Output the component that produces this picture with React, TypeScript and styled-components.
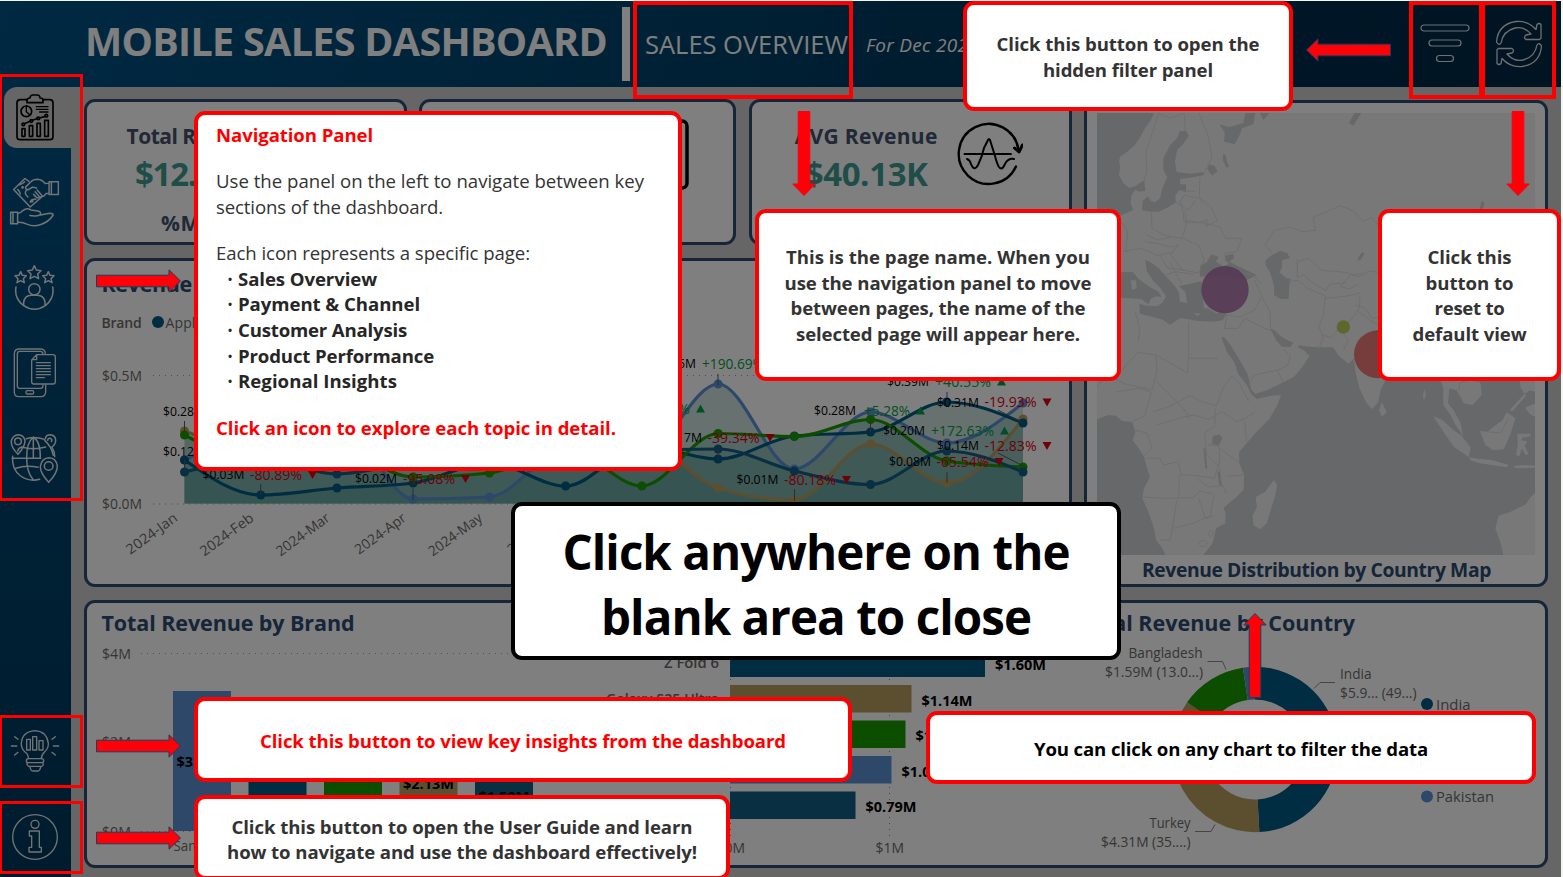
import React, { useLayoutEffect, useRef } from 'react';
import styled, { createGlobalStyle } from 'styled-components';

const FONT = '"Open Sans", "Noto Sans", sans-serif';
const C = {
  navy: '#2c4a70',
  slate: '#42506c',
  teal: '#3f9a8f',
  axis: '#6c6a69',
  ocean: '#005a82',
  deep: '#106084',
  green: '#189a00',
  tan: '#b89e60',
  blue: '#5c90d2',
  up: '#00a046',
  down: '#e00010',
};

const GlobalStyle = createGlobalStyle`
  html, body { margin: 0; padding: 0; background: #fff; }
  body { width: 1563px; height: 877px; overflow: hidden; font-family: ${FONT}; }
  * { box-sizing: border-box; }
  svg { display: block; }
  svg text { font-family: ${FONT}; }
`;

/* ---------- text whose tracking is adjusted to a set line width ---------- */

const Line = styled.span`
  display: inline-block;
  white-space: pre;
`;

function Fit({ w, children }: { w: number; children: string }) {
  const ref = useRef<HTMLSpanElement>(null);
  useLayoutEffect(() => {
    const el = ref.current;
    if (!el) return;
    el.style.letterSpacing = '0px';
    const natural = el.getBoundingClientRect().width;
    const step = (w - natural) / children.length;
    el.style.letterSpacing = `${step}px`;
  }, [w, children]);
  return <Line ref={ref}>{children}</Line>;
}

/* ---------- page shell ---------- */

const Page = styled.div`
  position: relative;
  width: 1563px;
  height: 877px;
  overflow: hidden;
  padding: 1px 2px 0 0;
  background: #f4f6f4;
`;

const Dashboard = styled.div`
  position: relative;
  display: flex;
  flex-direction: column;
  height: 876px;
  background: #cccccc;
`;

const Shade = styled.div`
  position: absolute;
  inset: 0;
  background: rgba(0, 0, 0, 0.5);
`;

const Header = styled.header`
  display: flex;
  align-items: center;
  height: 86px;
  flex: none;
  padding-left: 85px;
  color: #fff;
  background: linear-gradient(100deg, #005284 0%, #00446e 40%, #002c4c 85%, #002844 100%);
`;

const AppTitle = styled.h1`
  margin: 0;
  width: 537px;
  font-size: 39.5px;
  font-weight: 700;
  line-height: 52px;
  padding-bottom: 6px;
`;

const Divider = styled.div`
  width: 8px;
  height: 74px;
  background: #fff;
`;

const PageName = styled.div`
  width: 236px;
  padding-left: 15px;
  padding-bottom: 1px;
  font-size: 25.5px;
  line-height: 32px;
`;

const Period = styled.div`
  flex: 1;
  padding-top: 2px;
  font-size: 19px;
  font-style: italic;
  line-height: 26px;
`;

const HeaderButton = styled.button`
  display: flex;
  align-items: center;
  justify-content: center;
  width: 74px;
  height: 86px;
  padding: 0 1px 0 0;
  border: 0;
  background: none;
`;

const HeaderActions = styled.div`
  display: flex;
  padding-right: 5px;
`;

const Body = styled.div`
  display: flex;
  flex: 1;
`;

const Sidebar = styled.nav`
  display: flex;
  flex-direction: column;
  width: 71px;
  background: linear-gradient(180deg, #005284 0%, #00446e 45%, #00375c 100%);
`;

const NavGroup = styled.div<{ $gap: number; $top?: number }>`
  display: flex;
  flex-direction: column;
  gap: ${(p) => p.$gap}px;
  margin-top: ${(p) => p.$top ?? 0}px;
`;

const NavItem = styled.div<{ $active?: boolean }>`
  display: flex;
  align-items: center;
  justify-content: center;
  height: 61px;
  margin-left: 4px;
  padding-right: 6px;
  border-radius: 13px 0 0 13px;
  color: ${(p) => (p.$active ? '#000' : '#e4e8ec')};
  background: ${(p) => (p.$active ? '#cccccc' : 'transparent')};
`;

const Content = styled.main`
  display: grid;
  grid-template-columns: 323px 317px 323px 464px;
  grid-template-rows: 146px 329px 268px;
  column-gap: 12.333px;
  row-gap: 13px;
  padding: 12px 0 0 13px;
`;

const Card = styled.section<{ $area?: string; $top?: number }>`
  grid-area: ${(p) => p.$area ?? 'auto'};
  margin-top: ${(p) => p.$top ?? 0}px;
  border: 3px solid ${C.navy};
  border-radius: 11px;
  background: #fff;
  overflow: hidden;
  min-width: 0;
`;

const Kpi = styled(Card)`
  display: flex;
`;

const KpiText = styled.div<{ $w: number }>`
  display: flex;
  flex: none;
  flex-direction: column;
  align-items: center;
  width: ${(p) => p.$w}px;
  padding-top: 19px;
  color: ${C.slate};
  font-size: 21px;
  font-weight: 700;
  line-height: 30px;
`;

const KpiValue = styled.div`
  color: ${C.teal};
  font-size: 33px;
  line-height: 46px;
`;

const KpiSub = styled.div`
  margin-top: 11px;
`;

const KpiIcon = styled.div<{ $left: number; $top: number }>`
  margin: ${(p) => p.$top}px 0 0 ${(p) => p.$left}px;
`;

const ChartTitle = styled.h2<{ $pad?: number; $h?: number; $top?: number }>`
  margin: 0;
  height: ${(p) => p.$h ?? 40}px;
  padding: ${(p) => p.$top ?? 0}px 0 0 ${(p) => p.$pad ?? 14.5}px;
  color: ${C.navy};
  font-size: 21.5px;
  font-weight: 700;
  line-height: 40px;
`;

const Legend = styled.div`
  display: flex;
  align-items: center;
  gap: 2px;
  height: 32px;
  padding: 0 0 0 14.5px;
  color: ${C.axis};
  font-size: 14px;
  b { font-weight: 600; margin-right: 8px; }
`;

const Swatch = styled.i<{ $c: string }>`
  width: 12px;
  height: 12px;
  border-radius: 50%;
  background: ${(p) => p.$c};
`;

const Panels = styled(Card)`
  display: flex;
`;

const Panel = styled.div<{ $w: number }>`
  width: ${(p) => p.$w}px;
  flex: none;
`;

const MapCard = styled(Card)`
  padding: 10px 9px 0 10px;
`;

const MapTitle = styled.div`
  color: ${C.navy};
  font-size: 19.3px;
  font-weight: 700;
  line-height: 30px;
  text-align: center;
`;

/* ---------- guide layer ---------- */

type Box = { x: number; y: number; w: number; h: number };

const Outline = styled.div<{ $b: Box; $t?: number }>`
  position: absolute;
  left: ${(p) => p.$b.x}px;
  top: ${(p) => p.$b.y}px;
  width: ${(p) => p.$b.w}px;
  height: ${(p) => p.$b.h}px;
  border: ${(p) => p.$t ?? 3}px solid #ff0000;
`;

const Callout = styled.div<{ $b: Box; $tone?: string; $edge?: string; $nudge?: number }>`
  position: absolute;
  left: ${(p) => p.$b.x}px;
  top: ${(p) => p.$b.y}px;
  width: ${(p) => p.$b.w}px;
  height: ${(p) => p.$b.h}px;
  display: flex;
  flex-direction: column;
  align-items: center;
  justify-content: center;
  padding-top: ${(p) => p.$nudge ?? 0}px;
  border: 4px solid ${(p) => p.$edge ?? '#ff0000'};
  border-radius: 11px;
  background: #fff;
  color: ${(p) => p.$tone ?? '#333'};
  font-size: 18.6px;
  font-weight: 700;
  line-height: 25.7px;
`;

const NavCallout = styled(Callout)`
  display: block;
  padding: 7px 0 0 18px;
  font-weight: 400;
`;

const GuideCallout = styled(Callout)`
  line-height: 25px;
`;

const CloseCallout = styled(Callout)`
  font-size: 47.5px;
  line-height: 65px;
`;

const Para = styled.div<{ $gap?: number; $red?: boolean }>`
  margin-top: ${(p) => p.$gap ?? 0}px;
  color: ${(p) => (p.$red ? '#ff0000' : '#333')};
  font-weight: ${(p) => (p.$red ? 700 : 400)};
`;

const Bullet = styled.div`
  display: flex;
  padding-left: 12px;
  color: #262626;
  font-weight: 700;
  &::before {
    content: '•';
    width: 10px;
    font-size: 11px;
  }
`;

const ArrowSvg = styled.svg<{ $x: number; $y: number }>`
  position: absolute;
  left: ${(p) => p.$x}px;
  top: ${(p) => p.$y}px;
  overflow: visible;
`;

function Arrow({ x, y, dir }: { x: number; y: number; dir: 'right' | 'left' | 'up' | 'down' }) {
  const turn = { right: 0, left: 180, up: -90, down: 90 }[dir];
  const vertical = dir === 'up' || dir === 'down';
  const w = vertical ? 24 : 85;
  const h = vertical ? 85 : 24;
  return (
    <ArrowSvg $x={x} $y={y} width={w} height={h}>
      <g transform={`translate(${w / 2} ${h / 2}) rotate(${turn}) translate(-42.5 -12)`}>
        <path
          d="M.5 6.2H73V.8L84.5 12 73 23.2V17.8H.5Z"
          fill="#ff0008"
          stroke={dir === 'down' ? '#ff0008' : '#17405f'}
        />
      </g>
    </ArrowSvg>
  );
}

/* ---------- icons ---------- */

const line = { fill: 'none', stroke: 'currentColor', strokeLinejoin: 'round', strokeLinecap: 'round' } as const;

const ReportIcon = () => (
  <svg width="40" height="49" viewBox="44 276 120 147" {...line} strokeWidth="5">
    <path d="M80 296H60q-10 0-10 10v101q0 9 10 9h88q10 0 10-9V306q0-10-10-10h-20" />
    <path d="M80 305v-9q2-5 9-5 1-9 8-9h14q7 0 8 9 8 0 9 5v9Z" />
    <circle cx="78" cy="331" r="16" />
    <path d="M78 315v17l10 9M108 317h35M108 325h35M118 333h25" strokeWidth="4" />
    <path d="M65 383h9v23h-9ZM87 374h10v32H87ZM110 367h10v39h-10ZM133 358h11v48h-11Z" />
    <path d="M72 368l17-7M96 358l13-5M117 351l18-5" />
    <circle cx="69" cy="370" r="4" /><circle cx="93" cy="360" r="4" />
    <circle cx="114" cy="352" r="4" /><circle cx="138" cy="344" r="4" />
  </svg>
);

const PaymentIcon = () => (
  <svg width="51" height="51" viewBox="27 532 154 153" {...line} strokeWidth="4.5">
    <path d="M148 546h28v38h-28ZM155 546v38M148 550l-12 1q-9-12-23-13-13 0-19 7l-17 17q-1 8 8 8l13-8 12 3M148 581h-9l-4 5q-4 6-8 2l-15-17M127 589q-5 6-9 1l-12-14M118 592q-4 5-8 1l-9-9" />
    <path d="M87 545l-12-9-34 33 50 53 35-30M74 546q-7 8-16 9M53 569q8 7 8 14M84 592q-14-12-3-22M91 607q10-12 17-8" />
    <circle cx="68" cy="563" r="2" /><circle cx="96" cy="604" r="3" />
    <path d="M32 638h21v35H32ZM39 638v35M53 642q8 0 16-9 12-10 24-2l21 3q10 2 8 11-12 7-32 3M122 646l27-5q13 0 11 6-13 20-37 28-22 8-42-1-12-7-28-6" />
  </svg>
);

const CustomerIcon = () => (
  <svg width="43" height="48" viewBox="39 613 129 144" {...line} strokeWidth="4.5">
    <path d="M103 618l6 13 14 2-10 10 3 14-13-7-13 7 3-14-10-10 14-2ZM62 636l5 11 12 1-9 9 3 12-11-6-11 6 3-12-9-9 12-1ZM145 636l5 11 12 1-9 9 3 12-11-6-11 6 3-12-9-9 12-1Z" />
    <circle cx="103" cy="689" r="17" />
    <path d="M48 682q-6 34 22 55 33 23 67 0 27-22 21-55M71 737v-10q4-20 23-20h18q19 0 23 20v10" />
  </svg>
);

const ProductIcon = () => (
  <svg width="43" height="50" viewBox="38 56 129 150" {...line} strokeWidth="4">
    <path d="M135 72q-1-12-13-13H55q-13 1-13 14v115q0 14 13 14h67q13 0 14-14v-22" />
    <path d="M128 74q-1-8-8-8H58q-7 0-7 8v96q0 7 7 7h62q8 0 8-7v-4" />
    <path d="M109 76h49q7 0 7 7v74q0 7-7 7h-57q-7 0-7-7V92ZM109 76v15H95M108 100h42M108 109h42M108 118h42M108 127h42M108 136h42M108 145h24" />
    <rect x="77" y="184" width="23" height="10" rx="4" />
  </svg>
);

const RegionIcon = () => (
  <svg width="49" height="51" viewBox="34 309 147 153" {...line} strokeWidth="4.5">
    <path d="M83 326q26-8 54 2M42 379q-4 38 24 59 26 18 57 10M160 352q9 14 8 28M104 321v64M104 321q-21 18-20 64 0 42 20 65M104 321q22 14 21 64M40 385h86M57 363q2-9 12-12 34 10 72 0M52 415q30-10 66-3" />
    <path d="M58 373q-22-22-20-40 4-18 21-19 17 1 20 18 0 17-21 41Z" /><circle cx="58" cy="334" r="10" />
    <path d="M150 457q-26-28-25-48 4-25 26-26 21 1 25 24 1 21-26 50Z" /><circle cx="150" cy="408" r="13" />
    <path d="M140 326q2-12 14-12 17 1 17 17 0 12-11 20M147 331q1-7 8-6 7 3 3 10M138 331q20 18 26 45" />
  </svg>
);

const InsightIcon = () => (
  <svg width="50" height="43" viewBox="29 89 150 129" {...line} strokeWidth="4">
    <path d="M84 178q1-12-10-20-12-11-11-27 3-34 41-37 36 3 40 38 1 14-12 27-9 8-9 19Z" />
    <path d="M79 120h11v32H79ZM97 112h12v40H97ZM116 124h12v28h-12ZM84 178q-6 0-6 6t6 6h40q6 0 6-6t-6-6M84 190q-5 1-4 5t6 6h37q6-1 6-6t-5-5M88 201l4 11q2 3 6 3h14q4 0 6-3l4-11" />
    <path d="M33 140h16M159 140h16M43 112l10 8M155 120l10-8M43 167l10-8M155 159l10 8" />
  </svg>
);

const InfoIcon = () => (
  <svg width="48" height="48" viewBox="31 341 144 144" {...line} strokeWidth="4">
    <circle cx="103" cy="413" r="67" />
    <circle cx="103" cy="375" r="12" />
    <path d="M86 395h30v49h6v14H85v-14h8v-34h-7Z" />
  </svg>
);

const FilterIcon = () => (
  <svg width="50" height="40" viewBox="0 0 50 40" fill="none" stroke="#dde1e5" strokeWidth="1.2">
    <rect x="1" y="1" width="48" height="6" rx="3" />
    <rect x="9" y="16" width="32" height="6" rx="3" />
    <rect x="16.500" y="31.500" width="17" height="6" rx="3" />
  </svg>
);

const ResetIcon = () => (
  <svg width="48" height="48" viewBox="0 0 48 48" fill="none" stroke="#dde1e5" strokeWidth="1.3" strokeLinejoin="round">
    <path d="M1.500 22Q3 4 21 1.500q12-1 20 8l1-5q2-2 4 0v14l-1.500 1H31q-3-2 0-4.500l5-1Q29 6 20 8 8 11 6 23q-2 3-4.500-1Z" />
    <path d="M46.500 26Q45 44 27 46.500q-12 1-20-8l-1 5q-2 2-4 0v-14l1.500-1H17q3 2 0 4.500l-5 1q7 8 16 6 12-3 14-15 2-3 4.500 1Z" />
  </svg>
);

const CalcIcon = () => (
  <svg width="66" height="72" viewBox="0 0 66 72" {...line} strokeWidth="3.500" color="#000">
    <rect x="2" y="2" width="61" height="67" rx="5" />
    <path d="M13 14h39v12H13ZM14 38h8M28 38h8M43 38h8M14 54h8M28 54h8M43 54h8" />
  </svg>
);

const AverageIcon = () => (
  <svg width="66" height="64" viewBox="0 0 66 64" {...line} strokeWidth="2.400" color="#000">
    <path d="M59 44.500A30 30 0 1 1 61.500 28" />
    <path d="M57.500 26l4.500 4 3.500-7" strokeWidth="3" />
    <path d="M7.500 32H54M10 37q3 1 4 5 3 8 7 1 4-8 6-17l4-8q1-2 2 0l5 16q2 8 4 11 3 4 6-3 3-6 9-5" strokeWidth="2" />
  </svg>
);

/* ---------- line chart ---------- */

const MONTHS = ['Jan', 'Feb', 'Mar', 'Apr', 'May', 'Jun', 'Jul', 'Aug', 'Sep', 'Oct', 'Nov', 'Dec'];
const mx = (i: number) => 184.5 + i * 76.23;
const BASE = 503.5;

const SERIES = [
  { c: C.tan, y: [431, 450, 440, 452, 445, 462, 442, 488, 500, 444, 483, 419] },
  { c: C.blue, y: [460, 430, 420, 499, 497, 450, 455, 384, 469, 412, 443, 403] },
  { c: C.ocean, y: [460, 495, 488, 483, 463, 486, 446, 459, 436, 432, 402, 423] },
  { c: C.green, y: [435, 462, 450, 477, 473, 448, 486, 433.5, 436.5, 419.5, 461, 467] },
  { c: C.deep, y: [472, 459, 474, 463, 460, 452, 450, 449, 471, 484.5, 451, 472] },
];

function smooth(ys: number[]): string {
  const n = ys.length;
  const dx = 76.23;
  const m = ys.map((_, i) => {
    if (i === 0 || i === n - 1) return 0;
    const a = (ys[i] - ys[i - 1]) / dx;
    const b = (ys[i + 1] - ys[i]) / dx;
    if (a * b <= 0) return 0;
    return Math.sign(a) * Math.min(Math.abs(a), Math.abs(b), 0.25 * Math.abs(a + b)) * 2;
  });
  m[0] = (1.5 * (ys[1] - ys[0])) / dx - m[1] / 2;
  m[n - 1] = (1.5 * (ys[n - 1] - ys[n - 2])) / dx - m[n - 2] / 2;
  let d = `M${mx(0)} ${ys[0]}`;
  for (let i = 1; i < n; i++) {
    d += `C${mx(i - 1) + dx / 3} ${ys[i - 1] + (m[i - 1] * dx) / 3} ${mx(i) - dx / 3} ${ys[i] - (m[i] * dx) / 3} ${mx(i)} ${ys[i]}`;
  }
  return d;
}

type Tag = { x: number; y: number; v: string; p?: string; px?: number; pw?: number; up?: boolean };
const TAGS: Tag[] = [
  { x: 163, y: 416, v: '$0.28M' },
  { x: 163, y: 456, v: '$0.12M' },
  { x: 202.5, y: 479, v: '$0.03M', p: '-80.89%', px: 250, pw: 52 },
  { x: 355, y: 483, v: '$0.02M', p: '-95.08%', px: 403, pw: 52 },
  { x: 654, y: 368, v: '$0.46M', p: '+190.69%', px: 702, pw: 62, up: true },
  { x: 582, y: 413, v: '$0.28M', p: '+32.50%', px: 634, pw: 56, up: true },
  { x: 660, y: 442, v: '$0.17M', p: '-39.34%', px: 707.5, pw: 52 },
  { x: 736.5, y: 484, v: '$0.01M', p: '-80.18%', px: 784, pw: 52 },
  { x: 814, y: 415, v: '$0.28M', p: '+5.28%', px: 864, pw: 46, up: true },
  { x: 887, y: 386, v: '$0.39M', p: '+40.55%', px: 935, pw: 56, up: true },
  { x: 937, y: 406.5, v: '$0.31M', p: '-19.93%', px: 984.5, pw: 52 },
  { x: 883, y: 435, v: '$0.20M', p: '+172.63%', px: 931, pw: 63, up: true },
  { x: 937, y: 450, v: '$0.14M', p: '-12.83%', px: 984.5, pw: 52 },
  { x: 889, y: 466, v: '$0.08M', p: '-65.54%', px: 936.5, pw: 52 },
];

const Axis = ({ x, y, w, children, anchor }: { x: number; y: number; w?: number; children: string; anchor?: 'end' | 'start' }) => (
  <text x={x} y={y} fontSize="14" fill={C.axis} textAnchor={anchor} textLength={w} lengthAdjust="spacingAndGlyphs">{children}</text>
);

const RevenueTrend = () => (
  <svg width="982" height="246" viewBox="87 338 982 246">
    <g stroke="#9a9a9a" strokeDasharray="1 5">
      <path d="M153 375.500H1062M153 504H1062" />
    </g>
    <Axis x={102} y={381} w={40}>$0.5M</Axis>
    <Axis x={102} y={509} w={40}>$0.0M</Axis>
    {SERIES.map((s, i) => (
      <path key={i} d={`${smooth(s.y)}V${BASE}H${mx(0)}Z`} fill="#3f9187" fillOpacity="0.25" />
    ))}
    {SERIES.map((s, i) => (
      <g key={i}>
        <path d={smooth(s.y)} fill="none" stroke={s.c} strokeWidth="3.200" />
        {s.y.map((y, k) => <circle key={k} cx={mx(k)} cy={y} r="4.500" fill={s.c} />)}
      </g>
    ))}
    <path
      d="M184.500 421v11M184.500 460v10M260.700 484v10M413 488v12M718 374v11M718 449v11M794.500 489v12M870.500 420v12M947 392v9M947 472v11M998 410l25 13M998 453l25 13"
      stroke="#5a5a5a" fill="none"
    />
    {TAGS.map((t, i) => (
      <g key={i}>
        <text x={t.x} y={t.y} fontSize="12.500" fill="#000" textLength="42" lengthAdjust="spacingAndGlyphs">{t.v}</text>
        {t.p && t.px && t.pw && (
          <>
            <text x={t.px} y={t.y + 0.5} fontSize="14.500" fill={t.up ? C.up : C.down} textLength={t.pw} lengthAdjust="spacingAndGlyphs">{t.p}</text>
            <path
              transform={`translate(${t.px + t.pw + 10.5} ${t.y - 4})`}
              d={t.up ? 'M-4.500 3.500h9l-4.500-8Z' : 'M-4.500-4h9l-4.500 8Z'}
              fill={t.up ? C.up : C.down}
            />
          </>
        )}
      </g>
    ))}
    {MONTHS.map((m, i) => (
      <text key={m} transform={`translate(${178.500 + i * 76.23} 520) rotate(-36)`} fontSize="14" fill={C.axis} textAnchor="end" textLength={m === 'May' || m === 'Mar' || m === 'Feb' ? 62.5 : 59.5} lengthAdjust="spacingAndGlyphs">
        {`2024-${m}`}
      </text>
    ))}
  </svg>
);

/* ---------- bar charts ---------- */

const BRANDS = [
  { n: 'Samsung', x: 173, top: 691, c: C.blue, v: '$3.13M', y: 767 },
  { n: 'Apple', x: 248.500, top: 712, c: C.ocean, v: '$2.65M', y: 777 },
  { n: 'OnePlus', x: 324, top: 720, c: C.green, v: '$2.48M', y: 777 },
  { n: 'Vivo', x: 399.500, top: 736, c: C.tan, v: '$2.13M', y: 789 },
  { n: 'Xiaomi', x: 475, top: 764, c: C.deep, v: '$1.50M', y: 802 },
];

const BrandBars = () => (
  <svg width="503" height="222" viewBox="87 643 503 222">
    <path d="M141 653.500H560M141 742.500H560M141 831.500H560" stroke="#a0a0a0" strokeDasharray="1 5" />
    <Axis x={102} y={658.500} w={29}>$4M</Axis>
    <Axis x={102} y={747} w={29}>$2M</Axis>
    <Axis x={102} y={836.5} w={29}>$0M</Axis>
    {BRANDS.map((b) => (
      <g key={b.n}>
        <rect x={b.x} y={b.top} width="58" height={831 - b.top} fill={b.c} />
        <text x={b.x + 3.500} y={b.y} fontSize="14.300" fontWeight="700" textLength="51" lengthAdjust="spacingAndGlyphs">{b.v}</text>
        <Axis x={b.x + 0.5} y={851} w={b.n.length * 8.2}>{b.n}</Axis>
      </g>
    ))}
  </svg>
);

const PRODUCTS = [
  { n: 'Z Fold 6', y: 649.500, x: 985, c: C.ocean, v: '$1.60M', nw: 55 },
  { n: 'Galaxy S25 Ultra', y: 685, x: 911.500, c: C.tan, v: '$1.14M', nw: 113 },
  { n: 'iPhone 16 Pro', y: 720.500, x: 905.500, c: C.green, v: '$1.10M', nw: 92 },
  { n: 'OnePlus 13', y: 756, x: 891.500, c: C.blue, v: '$1.01M', nw: 76 },
  { n: 'Note 14 Pro', y: 791.500, x: 855.500, c: C.deep, v: '$0.79M', nw: 80 },
];

const ProductBars = () => (
  <svg width="480" height="222" viewBox="590 643 480 222">
    <path d="M730.500 643V836M889.500 643V836" stroke="#8c8c8c" strokeDasharray="1 5" />
    {PRODUCTS.map((p) => (
      <g key={p.n}>
        <rect x="730" y={p.y} width={p.x - 730} height="27.500" fill={p.c} />
        <text x={719 - p.nw} y={p.y + 18.500} fontSize="14" fontWeight="600" fill={C.axis} textLength={p.nw} lengthAdjust="spacingAndGlyphs">{p.n}</text>
        <text x={p.x + 10} y={p.y + 20.500} fontSize="14.300" fontWeight="700" textLength="51" lengthAdjust="spacingAndGlyphs">{p.v}</text>
      </g>
    ))}
    <Axis x={716.500} y={853} w={28.500}>$0M</Axis>
    <Axis x={875.500} y={853} w={28.500}>$1M</Axis>
  </svg>
);

/* ---------- donut ---------- */

const slice = (a0: number, a1: number) => {
  const pt = (r: number, a: number) => {
    const t = (a * Math.PI) / 180;
    return `${1255 + r * Math.sin(t)} ${749.5 - r * Math.cos(t)}`;
  };
  const big = a1 - a0 > 180 ? 1 : 0;
  return `M${pt(82.7, a0)}A82.7 82.7 0 ${big} 1 ${pt(82.7, a1)}L${pt(50, a1)}A50 50 0 ${big} 0 ${pt(50, a0)}Z`;
};

const CountryDonut = () => (
  <svg width="475" height="222" viewBox="1070 643 475 222">
    <path d={slice(0, 177)} fill={C.ocean} />
    <path d={slice(177, 304.8)} fill={C.tan} />
    <path d={slice(304.8, 351.6)} fill={C.green} />
    <path d={slice(351.6, 360)} fill={C.blue} />
    <path d="M1207.500 661.500h15l3.500 8M1335 682.500h-15l-6 6M1195 831.500h16l4-7" fill="none" stroke="#8a8a8a" />
    <Axis x={1128.500} y={658} w={74}>Bangladesh</Axis>
    <Axis x={1105} y={677} w={98}>$1.59M (13.0...)</Axis>
    <Axis x={1340} y={679} w={31.500}>India</Axis>
    <Axis x={1340} y={698} w={76.500}>$5.9... (49...)</Axis>
    <Axis x={1149.500} y={828} w={41}>Turkey</Axis>
    <Axis x={1101} y={847} w={89.500}>$4.31M (35....)</Axis>
    {[
      { n: 'India', c: C.ocean, y: 704, w: 34.5 },
      { n: 'Turkey', c: C.tan, y: 735, w: 44 },
      { n: 'Bangladesh', c: C.green, y: 766, w: 78 },
      { n: 'Pakistan', c: C.blue, y: 796.5, w: 58 },
    ].map((l) => (
      <g key={l.n}>
        <circle cx="1427" cy={l.y} r="6" fill={l.c} />
        <Axis x={1436} y={l.y + 5.500} w={l.w}>{l.n}</Axis>
      </g>
    ))}
  </svg>
);

/* ---------- map ---------- */

const LAND = [
  'M222 54L213 75 195 100 180 128 163 152 140 172 122 184 117 196 121 215 117 240 130 264 148 279 166 274 182 262 193 256 196 288 178 290 165 284 154 302 152 325 160 345 140 354 118 364 51 420V972L85 960 108 962 126 978 157 981 166 1012 158 1036 176 1060 193 1087 200 1116 210 1146 192 1180 187 1210 205 1250 222 1300 228 1335 246 1358 258 1382H368L398 1345 408 1300 436 1285 437 1255 430 1238 465 1210 491 1184 492 1140 478 1105 477 1072 495 1050 530 1010 568 972 592 930 603 900 570 903 530 912 514 897 498 866 475 838 462 800 441 772 424 727 432 726 450 748 476 790 503 838 514 884 526 897 560 886 610 862 642 845 664 820 688 784 672 766 655 758 657 740 645 736 632 755 606 756 588 735 570 700 584 706 602 724 628 738 664 752 700 756 760 757 776 782 806 806 822 790 826 830 838 878 860 925 877 942 894 922 903 882 920 850 1000 800 1080 850 1090 880 1090 930 1112 960 1126 990 1150 1022 1140 980 1120 945 1104 925 1108 880 1130 886 1150 925 1178 930 1205 900 1202 868 1180 830 1365 600V54Z',
  'M583 1155L591 1172 586 1200 560 1285 541 1303 521 1291 518 1262 531 1236 527 1206 556 1190 574 1165Z',
  'M905 922L920 950 906 965 898 946Z',
  'M1060 964L1086 974 1120 1005 1145 1022 1172 1058 1166 1086 1122 1056 1086 1004Z',
  'M1166 1087L1200 1092 1235 1095 1286 1110 1280 1117 1200 1105 1172 1096Z',
  'M1300 1113L1330 1110 1365 1112V1118L1310 1120Z',
  'M1200 1008L1222 1010 1245 992 1268 975 1280 952 1306 970 1292 1015 1272 1062 1240 1066 1216 1050Z',
  'M1312 1016H1350L1352 1024 1328 1028 1324 1036 1342 1040 1334 1052 1346 1078 1336 1080 1326 1060 1318 1084 1308 1080 1314 1046Z',
  'M1320 856H1365V890L1350 886 1334 896 1322 880ZM1290 944L1334 896 1338 902 1296 950ZM1335 938L1365 926V965L1350 958Z',
  'M1365 1195L1352 1206 1338 1228 1292 1250 1256 1262 1246 1300 1262 1345 1270 1380H1365Z',
  'M1034 882l3 18-5 16-3-16Z',
];

const WATER = [
  'M298 109L318 107 327 122 310 146 291 166 285 200 290 231 330 236 370 231 370 241 340 247 300 252 301 268 318 268 318 292 298 286 286 302 288 322 262 338 235 350 212 350 186 346 188 318 204 304 212 318 226 322 241 308 246 282 262 246 250 225 250 190 272 148 292 128Z',
  'M418 88L448 96 490 84 496 54H526L520 88 486 100 480 118 464 148 432 140 434 112Z',
  'M386 208l18 4 8 16-16 14-14-20ZM430 175l8 8 2 16 8 14-8 6-12-24ZM540 54h28l-18 22Z',
  'M806 84L824 54H844L820 92ZM1204 320h8v14l-10 16h-5Z',
  'M123 532L158 530 176 552 206 574 236 590 244 606 228 604 212 612 206 628 184 612 123 608ZM196 494L212 502 236 520 262 548 284 572 296 590 300 620 322 624 316 590 296 574 330 566 364 558 372 640 384 640 410 656 428 644 440 656 428 676 400 680 352 678 322 672 300 670 270 690 248 674 210 664 180 656 178 626 200 632 232 634 248 622 258 604 240 578 218 556 200 528Z',
  'M360 545L360 512 380 502 394 478 416 486 408 500 430 514 446 506 436 496 434 482 460 476 462 490 448 500 500 526 530 540 500 556 440 540Z',
  'M556 496L576 480 600 468 622 474 630 490 606 496 606 520 598 532 618 548 632 552 628 572 626 612 602 612 582 600 582 572 572 538 558 512Z',
  'M836 486L846 472 854 476 842 494 832 498ZM398 1024l20-6 10 12-12 22-20-6Z',
  'M370 1058l6 4 6 60-6-2ZM412 1128l8 4 4 42-6-2Z',
];

const BORDERS = [
  'M236 54L218 110 198 170 200 230 192 258M232 54l40 16 40-16 4 54M356 54l26 60 14 70-26 56M360 246l-2 60 34 30 20 40-34 18 4-20-30 10-40-4-2-30-10-30 14-20 44 10 12 16M286 320l40 26 20-30M300 286l44 4',
  'M214 350l2 50 40 22 50 8 14-46-6-36M320 376l60 10 40 10 16 34 50 0-16 40-40 6M306 430l50 20 16 44-16 40-50-10-34-44 24-34M200 420l30 14 40-6M196 440l40 6 34 10 26-4M130 470l50-10 30 10 20 12 44-10M240 480l20 36 24 10 20 40M270 500l10 20 36 6M123 380l20 30-6 60M256 540l30-10 56 8',
  'M556 450l26-44 50-10 34 14 40-4-6-40 60-24 20-10 40 16 30 30 26-10 20 26M556 450l20 24M652 492v56l20-8 20 18 46 30 10-20 40-4 24-24 34-4M652 500l34-10 40 36 70 6 40 14 30-18 28 4M620 560l36-4 30 26 50 20-6 60-14 34 14 30-14 36M736 610l60-6 44-10M840 600l-2 40-30 40-20 8-34 40-30-10M800 560l-20 14 26 8 30-14M790 766l14-30-20-30',
  'M524 556l20 46 26 50 2 46M440 660l40 6 44-20 20-40M440 660l-6 40 40 0 20-30 60 30 18 6M490 532l30 10 26 26M512 860l10-20 70-14 30-14 10-30-24-20M610 862l-18-36',
  'M165 650l14 50-4 40M326 680v110h88M123 830l50-58 54 8 96 54 2-44',
  'M51 870l40-30 40 26 86 18 14-60-4-44M110 890l70-10 34 12-20 70-36 16M230 860l80 80 20 30M220 950l50-16 60-32 40 20 40 10 20-54 26-36 20 20 30 56M232 990l70-22 40-8 44 14 40-24 44 30 26-10 30-20M160 1004l40 10 16 44-24 24M200 1090l40 0 10 20 44-10 10 40h30l70 10 10-40-34-30-6-66 30-20 2-54',
  'M190 1206l60 4 90-2 20-20 38 8M290 1215l-10 70-10 50h-30M280 1300l60-16 50-20 12-66M356 1210l20 60 26-8M436 1144l54-4M420 1060l56 42M384 1048l34 6 0 60 6 50 14 30M298 1140l-2 70M500 1040l-6-60M360 1340a12 9 0 1 0 .1-.1M388 1308a7 9 0 1 0 .1-.1M350 1150l36 26 40-4',
  'M1136 886l4-22 30-10 26 6M1150 925l-10-26M1222 1010l40 4 24-44M826 630l30 10 20 30 30-4M836 650l40 30 26 10',
];

const RegionMap = () => (
  <svg width="438" height="442" viewBox="51 54 1314 1326">
    <rect x="51" y="54" width="1314" height="1326" fill="#cfd1d3" />
    {LAND.map((d, i) => <path key={i} d={d} fill="#f1f1f0" />)}
    {WATER.map((d, i) => <path key={i} d={d} fill="#cfd1d3" />)}
    <path d="M152 556h16l2 24-14 4ZM340 654l24 2-12 6ZM408 640l26-8-12 12Z" fill="#f1f1f0" />
    {BORDERS.map((d, i) => <path key={i} d={d} fill="none" stroke="#dddddd" strokeWidth="3" strokeLinejoin="round" />)}
    <circle cx="435" cy="584" r="71" fill="#ac74aa" fillOpacity="0.92" />
    <circle cx="790" cy="696" r="20" fill="#bcd058" />
    <circle cx="894" cy="778" r="72" fill="#ee7a78" />
  </svg>
);

/* ---------- app ---------- */

export default function App() {
  return (
    <Page>
      <GlobalStyle />
      <Dashboard>
        <Header>
          <AppTitle><Fit w={522}>MOBILE SALES DASHBOARD</Fit></AppTitle>
          <Divider />
          <PageName><Fit w={203}>SALES OVERVIEW</Fit></PageName>
          <Period><Fit w={113}>For Dec 2024</Fit></Period>
          <HeaderActions>
            <HeaderButton><FilterIcon /></HeaderButton>
            <HeaderButton><ResetIcon /></HeaderButton>
          </HeaderActions>
        </Header>
        <Body>
          <Sidebar>
            <NavGroup $gap={24.3}>
              <NavItem $active><ReportIcon /></NavItem>
              <NavItem><PaymentIcon /></NavItem>
              <NavItem><CustomerIcon /></NavItem>
              <NavItem><ProductIcon /></NavItem>
              <NavItem><RegionIcon /></NavItem>
            </NavGroup>
            <NavGroup $gap={25.5} $top={231}>
              <NavItem><InsightIcon /></NavItem>
              <NavItem><InfoIcon /></NavItem>
            </NavGroup>
          </Sidebar>
          <Content>
            <Kpi>
              <KpiText $w={222}>
                <Fit w={143}>Total Revenue</Fit>
                <KpiValue><Fit w={126}>$12.04M</Fit></KpiValue>
                <KpiSub><Fit w={74}>%MoM</Fit></KpiSub>
              </KpiText>
            </Kpi>
            <Kpi>
              <KpiText $w={200}>
                <Fit w={110}>Total Units</Fit>
                <KpiValue><Fit w={90}>19.2K</Fit></KpiValue>
              </KpiText>
              <KpiIcon $left={2} $top={17}><CalcIcon /></KpiIcon>
            </Kpi>
            <Kpi>
              <KpiText $w={229}>
                <Fit w={143}>AVG Revenue</Fit>
                <KpiValue><Fit w={123}>$40.13K</Fit></KpiValue>
              </KpiText>
              <KpiIcon $left={-24} $top={20}><AverageIcon /></KpiIcon>
            </Kpi>
            <MapCard $area="1 / 4 / 3 / 5" $top={1}>
              <RegionMap />
              <MapTitle><Fit w={349}>Revenue Distribution by Country Map</Fit></MapTitle>
            </MapCard>
            <Card $area="2 / 1 / 3 / 4">
              <ChartTitle $h={45} $top={3}><Fit w={324}>Revenue Trend by Brand Name</Fit></ChartTitle>
              <Legend>
                <b><Fit w={40}>Brand</Fit></b>
                <Swatch $c={C.ocean} />
                <Fit w={38}>Apple</Fit>
              </Legend>
              <RevenueTrend />
            </Card>
            <Panels $area="3 / 1 / 4 / 5">
              <Panel $w={503}>
                <ChartTitle><Fit w={253}>Total Revenue by Brand</Fit></ChartTitle>
                <BrandBars />
              </Panel>
              <Panel $w={480}>
                <ChartTitle><Fit w={250}>Top 5 Models by Revenue</Fit></ChartTitle>
                <ProductBars />
              </Panel>
              <Panel $w={475}>
                <ChartTitle $pad={8}><Fit w={277}>Total Revenue by Country</Fit></ChartTitle>
                <CountryDonut />
              </Panel>
            </Panels>
          </Content>
        </Body>
        <Shade />
      </Dashboard>

      <Outline $b={{ x: -1, y: 74, w: 84, h: 427 }} />
      <Outline $b={{ x: -1, y: 715, w: 84, h: 73 }} />
      <Outline $b={{ x: -1, y: 801, w: 84, h: 73 }} />
      <Outline $b={{ x: 633, y: 1, w: 220, h: 98 }} $t={4} />
      <Outline $b={{ x: 1409, y: 1, w: 74, h: 98 }} $t={4} />
      <Outline $b={{ x: 1481, y: 1, w: 75, h: 98 }} $t={4} />

      <NavCallout $b={{ x: 194, y: 111, w: 488, h: 360 }}>
        <Para $red><Fit w={157}>Navigation Panel</Fit></Para>
        <Para $gap={20.3}>
          <Fit w={428}>Use the panel on the left to navigate between key</Fit>
          <br />
          <Fit w={227}>sections of the dashboard.</Fit>
        </Para>
        <Para $gap={20.5}><Fit w={314}>Each icon represents a specific page:</Fit></Para>
        <Bullet><Fit w={139}>Sales Overview</Fit></Bullet>
        <Bullet><Fit w={182}>Payment &amp; Channel</Fit></Bullet>
        <Bullet><Fit w={169}>Customer Analysis</Fit></Bullet>
        <Bullet><Fit w={196}>Product Performance</Fit></Bullet>
        <Bullet><Fit w={159}>Regional Insights</Fit></Bullet>
        <Para $gap={21} $red><Fit w={400}>Click an icon to explore each topic in detail.</Fit></Para>
      </NavCallout>

      <Callout $b={{ x: 755, y: 209, w: 366, h: 172 }} $nudge={0.5}>
        <Fit w={304}>This is the page name. When you</Fit>
        <Fit w={307}>use the navigation panel to move</Fit>
        <Fit w={295}>between pages, the name of the</Fit>
        <Fit w={284}>selected page will appear here.</Fit>
      </Callout>

      <Callout $b={{ x: 963, y: 1, w: 330, h: 110 }} $nudge={2}>
        <Fit w={263}>Click this button to open the</Fit>
        <Fit w={170}>hidden filter panel</Fit>
      </Callout>

      <Callout $b={{ x: 1378, y: 209, w: 183, h: 172 }} $nudge={0.5}>
        <Fit w={84}>Click this</Fit>
        <Fit w={88}>button to</Fit>
        <Fit w={70}>reset to</Fit>
        <Fit w={114}>default view</Fit>
      </Callout>

      <CloseCallout $b={{ x: 511, y: 502, w: 610, h: 158 }} $edge="#000" $tone="#000" $nudge={5}>
        <Fit w={507}>Click anywhere on the</Fit>
        <Fit w={430}>blank area to close</Fit>
      </CloseCallout>

      <Callout $b={{ x: 194, y: 697, w: 658, h: 85 }} $tone="#ff0000" $nudge={3}>
        <Fit w={526}>Click this button to view key insights from the dashboard</Fit>
      </Callout>

      <GuideCallout $b={{ x: 194, y: 795, w: 536, h: 85 }} $nudge={2}>
        <Fit w={461}>Click this button to open the User Guide and learn</Fit>
        <Fit w={470}>how to navigate and use the dashboard effectively!</Fit>
      </GuideCallout>

      <Callout $b={{ x: 926, y: 711, w: 610, h: 73 }} $tone="#000" $nudge={3}>
        <Fit w={394}>You can click on any chart to filter the data</Fit>
      </Callout>

      <Arrow dir="right" x={96} y={269} />
      <Arrow dir="right" x={96} y={734} />
      <Arrow dir="right" x={96} y={826} />
      <Arrow dir="down" x={792} y={111} />
      <Arrow dir="down" x={1506} y={111} />
      <Arrow dir="left" x={1305.5} y={38} />
      <Arrow dir="up" x={1243} y={612.5} />
    </Page>
  );
}
